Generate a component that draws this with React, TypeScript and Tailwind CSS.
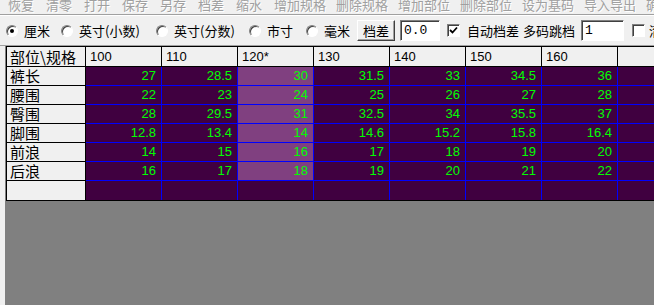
import React from 'react';

const TOOLBAR = ['恢复', '清零', '打开', '保存', '另存', '档差', '缩水', '增加规格', '删除规格', '增加部位', '删除部位', '设为基码', '导入导出', '确定'];

const UNITS = [
    { label: '厘米', w: 'w-[55px]', checked: true },
    { label: '英寸(小数)', w: 'w-[95px]' },
    { label: '英寸(分数)', w: 'w-[93px]' },
    { label: '市寸', w: 'w-[57px]' },
    { label: '毫米', w: 'w-[51px]' },
];

const SIZES = ['100', '110', '120*', '130', '140', '150', '160'];
const BASE_COL = 2;

const ROWS: [string, string[]][] = [
    ['裤长', ['27', '28.5', '30', '31.5', '33', '34.5', '36']],
    ['腰围', ['22', '23', '24', '25', '26', '27', '28']],
    ['臀围', ['28', '29.5', '31', '32.5', '34', '35.5', '37']],
    ['脚围', ['12.8', '13.4', '14', '14.6', '15.2', '15.8', '16.4']],
    ['前浪', ['14', '15', '16', '17', '18', '19', '20']],
    ['后浪', ['16', '17', '18', '19', '20', '21', '22']],
];

function Radio({ checked }: { checked?: boolean }) {
    return (
        <span className="flex h-[12px] w-[12px] shrink-0 items-center justify-center rounded-full border border-b-white border-l-[#808080] border-r-white border-t-[#808080] bg-white shadow-[inset_1px_1px_0_#404040]">
            {checked && <span className="h-[4px] w-[4px] rounded-full bg-black" />}
        </span>
    );
}

function Checkbox({ checked }: { checked?: boolean }) {
    return (
        <span className="flex h-[13px] w-[13px] shrink-0 items-center justify-center border border-b-white border-l-[#808080] border-r-white border-t-[#808080] bg-white shadow-[inset_1px_1px_0_#404040]">
            {checked && (
                <svg width="9" height="9" viewBox="0 0 9 9">
                    <path d="M1 4 L3.5 6.5 L8 1.5" stroke="#000" strokeWidth="1.8" fill="none" />
                </svg>
            )}
        </span>
    );
}

function Field({ value, w }: { value: string; w: string }) {
    return (
        <span className={`flex h-[21px] ${w} shrink-0 items-center border border-b-white border-l-[#808080] border-r-white border-t-[#808080] bg-white pl-[3px] font-['Liberation_Mono',monospace] text-[13px] text-black shadow-[inset_1px_1px_0_#404040]`}>
            {value}
        </span>
    );
}

export default function App() {
    return (
        <div className="flex h-[305px] w-[654px] flex-col overflow-hidden bg-[#f0f0f0] font-['Noto_Sans_CJK_SC',sans-serif]">
            {/* toolbar (scrolled, top cut off) */}
            <div className="flex h-[14px] shrink-0 overflow-hidden pl-[8px] text-[13px] leading-[13px] text-[#a0a0a0] [text-shadow:1px_1px_0_#fff]">
                {TOOLBAR.map((t) => (
                    <span key={t} className={`mt-[-2px] shrink-0 whitespace-nowrap ${t.length > 2 ? 'w-[62px]' : 'w-[38px]'}`}>
                        {t}
                    </span>
                ))}
            </div>
            <div className="h-[2px] shrink-0 border-b border-t border-b-white border-t-[#a0a0a0]" />

            {/* unit options */}
            <div className="flex h-[29px] shrink-0 items-center overflow-hidden pl-[6px] text-[13px] leading-[16px] text-black">
                {UNITS.map((u) => (
                    <div key={u.label} className={`flex shrink-0 items-center ${u.w}`}>
                        <Radio checked={u.checked} />
                        <span className="ml-[6px] whitespace-nowrap">{u.label}</span>
                    </div>
                ))}
                <span className="flex h-[21px] w-[38px] shrink-0 items-center justify-center border border-b-[#404040] border-l-white border-r-[#404040] border-t-white bg-[#f0f0f0] shadow-[inset_-1px_-1px_0_#a0a0a0]">
                    档差
                </span>
                <span className="ml-[5px]">
                    <Field value="0.0" w="w-[40px]" />
                </span>
                <span className="ml-[7px]">
                    <Checkbox checked />
                </span>
                <span className="ml-[7px] shrink-0 whitespace-nowrap">自动档差</span>
                <span className="ml-[4px] shrink-0 whitespace-nowrap">多码跳档</span>
                <span className="ml-[6px]">
                    <Field value="1" w="w-[43px]" />
                </span>
                <span className="ml-[8px]">
                    <Checkbox />
                </span>
                <span className="ml-[4px] shrink-0 whitespace-nowrap">清除</span>
            </div>
            <div className="h-px shrink-0 bg-[#a0a0a0]" />

            {/* grid area */}
            <div className="flex flex-1">
                <div className="w-[5px] shrink-0 bg-[#f0f0f0]" />
                <div className="flex-1 bg-[#808080] pl-px">
                    <div className="grid grid-cols-[79px_repeat(7,76px)_1fr] border-b border-l border-t border-black">
                        <div className="flex h-[20px] items-center border-b border-r border-black bg-[#f0f0f0] pl-[3px] text-[15px] leading-[18px] text-black">
                            部位\规格
                        </div>
                        {SIZES.map((s) => (
                            <div key={s} className="flex h-[20px] items-center border-b border-r border-black bg-[#f0f0f0] pl-[4px] font-['Liberation_Sans',sans-serif] text-[13px] text-black">
                                {s}
                            </div>
                        ))}
                        <div className="h-[20px] border-b border-black bg-[#f0f0f0]" />

                        {ROWS.map(([name, vals]) => (
                            <React.Fragment key={name}>
                                <div className="flex h-[19px] items-center border-b border-r border-black bg-[#f0f0f0] pl-[3px] text-[15px] leading-[18px] text-black">
                                    {name}
                                </div>
                                {vals.map((v, i) => (
                                    <div
                                        key={i}
                                        className={`flex h-[19px] items-center justify-end border-b border-r border-[#0000ff] pr-[5px] font-['Liberation_Sans',sans-serif] text-[13px] text-[#00ff00] ${i === BASE_COL ? 'bg-[#804080]' : 'bg-[#400040]'}`}
                                    >
                                        {v}
                                    </div>
                                ))}
                                <div className="h-[19px] border-b border-[#0000ff] bg-[#400040]" />
                            </React.Fragment>
                        ))}

                        <div className="h-[19px] border-r border-black bg-[#f0f0f0]" />
                        {SIZES.map((s) => (
                            <div key={s} className="h-[19px] border-r border-[#0000ff] bg-[#400040]" />
                        ))}
                        <div className="h-[19px] bg-[#400040]" />
                    </div>
                </div>
            </div>
        </div>
    );
}
